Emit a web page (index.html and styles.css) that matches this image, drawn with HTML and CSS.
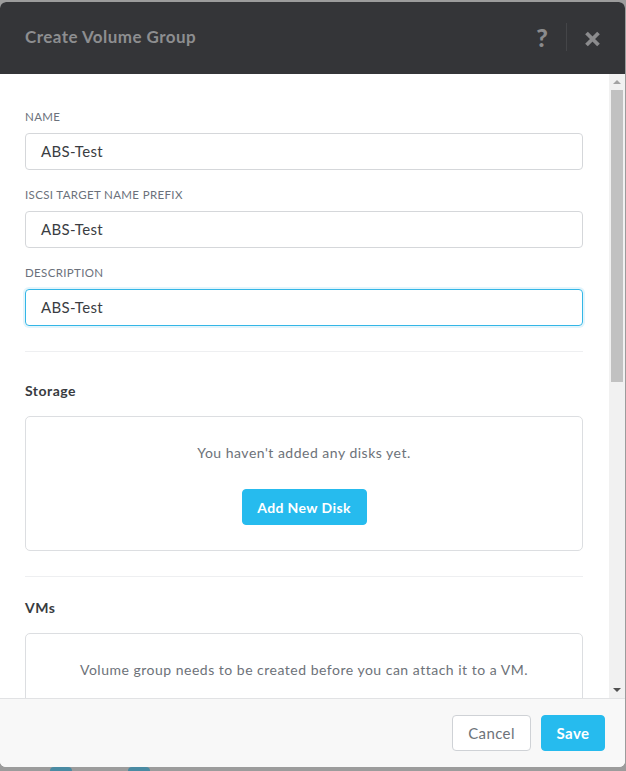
FILE: index.html
```html
<!DOCTYPE html>
<html lang="en">
<head>
<meta charset="utf-8">
<title>Create Volume Group</title>
<link rel="stylesheet" href="styles.css">
</head>
<body>
<div class="modal">
  <div class="modal-header">
    <h1 class="modal-title">Create Volume Group</h1>
    <div class="header-actions">
      <span class="help">?</span>
      <span class="sep"></span>
      <svg class="close" width="17" height="16" viewBox="0 0 17 16"><path d="M2.5 2 L14.5 14 M14.5 2 L2.5 14" stroke="#8b8b8d" stroke-width="3.8" stroke-linecap="butt"/></svg>
    </div>
  </div>
  <div class="modal-body">
    <div class="content">
      <div class="fields">
        <div class="field">
          <label class="label">NAME</label>
          <div class="input">ABS-Test</div>
        </div>
        <div class="field">
          <label class="label">ISCSI TARGET NAME PREFIX</label>
          <div class="input">ABS-Test</div>
        </div>
        <div class="field">
          <label class="label">DESCRIPTION</label>
          <div class="input focused">ABS-Test</div>
        </div>
      </div>
      <div class="divider"></div>
      <div class="section section-storage">
        <h2 class="section-title">Storage</h2>
        <div class="panel">
          <p class="empty">You haven't added any disks yet.</p>
          <button class="btn btn-primary btn-add">Add New Disk</button>
        </div>
      </div>
      <div class="divider"></div>
      <div class="section section-vms">
        <h2 class="section-title">VMs</h2>
        <div class="panel panel-vms">
          <p class="empty">Volume group needs to be created before you can attach it to a VM.</p>
        </div>
      </div>
    </div>
    <div class="scrollbar">
      <div class="sb-btn sb-up"><span class="tri-up"></span></div>
      <div class="sb-track">
        <div class="sb-thumb"></div>
      </div>
      <div class="sb-btn sb-down"><span class="tri-down"></span></div>
    </div>
  </div>
  <div class="modal-footer">
    <button class="btn btn-default">Cancel</button>
    <button class="btn btn-primary">Save</button>
  </div>
</div>
<div class="behind">
  <span class="pill"></span>
  <span class="pill"></span>
</div>
</body>
</html>
```
FILE: styles.css
```css
html, body {
  margin: 0;
  padding: 0;
}
body {
  background: #9c9c9c;
  font-family: Lato, "Open Sans", "Liberation Sans", sans-serif;
  overflow: hidden;
  height: 771px;
}
.modal {
  margin-top: 2px;
  width: 625px;
  height: 765px;
  background: #fff;
  border-radius: 6px;
  overflow: hidden;
  display: flex;
  flex-direction: column;
}
.modal-header {
  height: 72px;
  flex: none;
  background: #343538;
  display: flex;
  align-items: center;
  justify-content: space-between;
  padding: 0 24px 0 25px;
  box-sizing: border-box;
}
.modal-title {
  margin: 0;
  font-size: 17px;
  font-weight: 700;
  color: #8d8e90;
  letter-spacing: 0.45px;
  position: relative;
  top: -2px;
}
.header-actions {
  display: flex;
  align-items: center;
  position: relative;
  top: -1px;
}
.help {
  font-size: 25px;
  font-weight: 900;
  color: #8b8b8d;
  line-height: 24px;
}
.sep {
  width: 1px;
  height: 28px;
  background: #444548;
  margin: 0 17px 0 18px;
}
.close {
  display: block;
  position: relative;
  top: 2px;
}
.modal-body {
  flex: 1;
  min-height: 0;
  display: flex;
  background: #fff;
}
.content {
  flex: 1;
  min-width: 0;
  overflow: hidden;
  padding: 35px 26px 0 25px;
}
.scrollbar {
  width: 16px;
  flex: none;
  background: #f1f1f1;
  display: flex;
  flex-direction: column;
}
.sb-btn {
  height: 16px;
  flex: none;
  display: flex;
  align-items: center;
  justify-content: center;
}
.tri-up {
  width: 0;
  height: 0;
  border-left: 4px solid transparent;
  border-right: 4px solid transparent;
  border-bottom: 4px solid #a3a3a3;
}
.tri-down {
  width: 0;
  height: 0;
  border-left: 4px solid transparent;
  border-right: 4px solid transparent;
  border-top: 4px solid #505050;
}
.sb-track {
  flex: 1;
  padding: 0 2px;
}
.sb-thumb {
  height: 292px;
  background: #c1c1c1;
}
.fields {
  display: flex;
  flex-direction: column;
  gap: 17px;
}
.field {
  display: flex;
  flex-direction: column;
  gap: 8px;
}
.label {
  font-size: 11.5px;
  line-height: 16px;
  color: #6b717b;
  letter-spacing: 0.35px;
}
.input {
  height: 37px;
  box-sizing: border-box;
  border: 1px solid #d5d7da;
  border-radius: 4px;
  padding: 0 15px;
  font-size: 15px;
  line-height: 35px;
  color: #3a3d42;
  letter-spacing: 0.3px;
}
.input.focused {
  border-color: #34b6e6;
  box-shadow: 0 0 0 2px #e3f5fc;
}
.divider {
  height: 1px;
  background: #eeeff1;
  margin-top: 25px;
}
.section-storage {
  padding-top: 30px;
}
.section-vms {
  padding-top: 22px;
}
.section-title {
  margin: 0 0 16px 0;
  font-size: 14px;
  line-height: 18px;
  font-weight: 700;
  color: #383b40;
  letter-spacing: 0.5px;
}
.panel {
  border: 1px solid #dcdee1;
  border-radius: 5px;
  display: flex;
  flex-direction: column;
  align-items: center;
  padding: 26px 0 25px;
  gap: 26px;
}
.panel-vms {
  padding-bottom: 100px;
}
.empty {
  margin: 0;
  font-size: 14px;
  line-height: 20px;
  color: #6d7279;
  letter-spacing: 0.5px;
}
.btn {
  font-family: Lato, "Open Sans", "Liberation Sans", sans-serif;
  font-size: 14px;
  height: 36px;
  border-radius: 4px;
  box-sizing: border-box;
  cursor: pointer;
  letter-spacing: 0.4px;
  padding: 0;
}
.btn-primary {
  background: #26bbee;
  border: 1px solid #26bbee;
  color: #fff;
  font-weight: 700;
}
.btn-add {
  width: 125px;
}
.btn-default {
  background: #fff;
  border: 1px solid #cfd2d6;
  color: #6d7279;
  width: 79px;
  font-size: 15px;
}
.modal-footer {
  height: 69px;
  flex: none;
  background: #f8f8f8;
  border-top: 1px solid #e1e2e4;
  box-sizing: border-box;
  display: flex;
  align-items: center;
  justify-content: flex-end;
  gap: 10px;
  padding-right: 20px;
}
.modal-footer .btn-primary {
  width: 64px;
  font-size: 15px;
}
.behind {
  display: flex;
  gap: 56px;
  padding-left: 50px;
}
.pill {
  width: 22px;
  height: 10px;
  background: #4a8ba3;
  border-radius: 4px;
}
```
